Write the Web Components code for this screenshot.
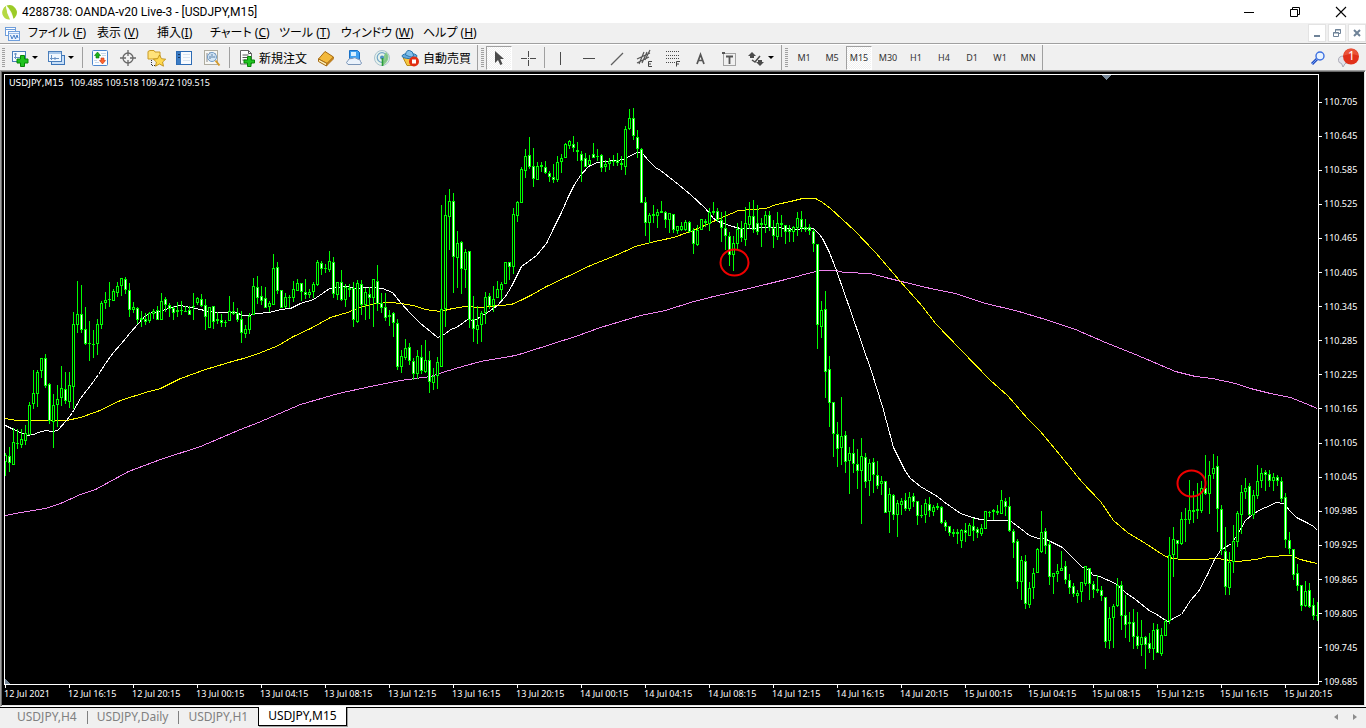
<!DOCTYPE html>
<html lang="ja">
<head>
<meta charset="utf-8">
<title>4288738: OANDA-v20 Live-3 - [USDJPY,M15]</title>
<style>
  html, body { height: 100%; margin: 0; }
  body { background: #f0f0f0; font-family: "Noto Sans", "Noto Sans CJK JP", sans-serif; font-size: 12px; color: #000; overflow: hidden; }
</style>
</head>
<body>
<trade-terminal></trade-terminal>
<script>
const ICONS = {
  logo: [16, 16, `<path d="M4 2A7.5 7.5 0 0 0 4.500 14L7 15 4.500 8z" fill="#a4cf2b"/><path d="M4 1.800Q8 3 11.500 10L12 14.500Q8 16 5 13Q6 6 4 1.800z" fill="#f4f9e4"/><path d="M4.500 1.500A7.600 7.600 0 0 1 13 13.500L11.500 15Q10 7 4.500 1.500z" fill="#9bcb27"/><path d="M1.200 5A7 7 0 0 0 8 15.500Q4.500 9 3.800 2.200 1.500 3.500 1.200 5z" fill="#b5d943"/><path d="M4 2q4 4 7.500 13l-3 .5Q5 9 4 2z" fill="#fff"/>`],
  mdi: [15, 15, `<rect x=".5" y="1.500" width="10" height="8" fill="#fff" stroke="#6f9edb"/><path d="M1 3.500h9" stroke="#6f9edb"/><rect x="3.500" y="5.500" width="11" height="9" fill="#eef5ff" stroke="#6f9edb"/><path d="M4 7.500h10" stroke="#9dbde8"/><path d="M5.500 9l1.500 4 2-4 1.500 4 1.500-4 1 3" fill="none" stroke="#477fc8"/>`],
  newchart: [18, 18, `<rect x="1.500" y="2.500" width="13" height="10" fill="#f5faff" stroke="#4a7ebb"/><path d="M4.500 4v6M3 8.500h9M3 5h3" stroke="#6892c4" fill="none"/><path d="M9.500 6.500h4v3.500h3.500v4h-3.500v3.500h-4v-3.500H6v-4h3.500z" fill="#1fc31f" stroke="#078607"/>`],
  profiles: [18, 18, `<rect x="4.500" y="6.500" width="13" height="9" fill="#c8dff7" stroke="#3b74b8"/><rect x="1.500" y="2.500" width="13" height="10" fill="#f0f7ff" stroke="#4a7ebb"/><path d="M2 4h12" stroke="#a9c8ea" stroke-width="2"/><path d="M4.500 6v5M3 9.500h9M8 8v3" stroke="#6892c4"/>`],
  market: [18, 18, `<rect x="1.500" y="1.500" width="15" height="15" rx="1" fill="#fbfdff" stroke="#4b86cf"/><path d="M10 4.500h5M4 13.500h4M11 6.500h4M3 11.500h3" stroke="#c6d6e8"/><path d="M6.500 3l3 3.500H8V9H5V6.500H3.500z" fill="#19b419" stroke="#057705" stroke-width=".6"/><path d="M11.500 15l3-3.500H13V9h-3v2.500H8.500z" fill="#ff642e" stroke="#c6330b" stroke-width=".6"/>`],
  navigator: [18, 18, `<circle cx="9" cy="9" r="5" fill="none" stroke="#686868" stroke-width="1.300"/><path d="M9 1v6M9 11v6M1 9h6M11 9h6" stroke="#686868" stroke-width="1.300"/>`],
  favorites: [19, 18, `<path d="M1 2.500l2-1h4l1 1.500h5V10H1z" fill="#ffe27a" stroke="#c99a24"/><path d="M4.500 11v5.500h5" fill="none" stroke="#333" stroke-dasharray="1 1"/><path d="M12.500 6l2 3.700 4.200.5-3.100 2.800.9 4.200-4-2.200-4 2.200.9-4.200-3-2.800 4.200-.5z" fill="#ffd94f" stroke="#b8860b" stroke-width=".8"/>`],
  terminal: [18, 18, `<rect x="1.500" y="2.500" width="15" height="13" fill="#f8fbff" stroke="#2d6cb5"/><rect x="2" y="3" width="4" height="12" fill="#3c7cc4"/><path d="M3 5.500h2M3 8.500h2" stroke="#16355e"/><path d="M8 5.500h7M8 8.500h7M8 11.500h7" stroke="#d8e4f0"/>`],
  tester: [18, 18, `<rect x="1.500" y="1.500" width="13" height="14" fill="#f7f7f4" stroke="#b0ada0"/><path d="M4 4v9M7 3v7M12 4v5" stroke="#8a8a8a"/><circle cx="9" cy="8" r="4.500" fill="#cde4f8" fill-opacity=".8" stroke="#6f9bc8"/><path d="M7 7v3M9 5v4M11 7v2" stroke="#5b82aa"/><path d="M12.500 11.500l4 5" stroke="#d49b2c" stroke-width="2"/>`],
  order: [18, 18, `<path d="M2.500 1.500h8l3 3v10.500h-11z" fill="#fff" stroke="#666"/><path d="M10.500 1.500v3h3M4.500 6h6M4.500 8.500h6M4.500 11h4" stroke="#555" fill="none"/><path d="M9.500 7.500h3.500v3.500h3.500v3H13v3.500H9.500V14H6v-3h3.500z" fill="#22c522" stroke="#078607"/>`],
  metaeditor: [18, 18, `<path d="M1.500 10L8 2.500l8.500 5.500L10 14.500z" fill="#f3b93c" stroke="#a66a10"/><path d="M1.500 10v2.500L9.500 17l.5-2.500z" fill="#fff0b8" stroke="#a66a10"/><path d="M10 14.500l6.500-6.500v2L9.500 17z" fill="#cc8718" stroke="#a66a10" stroke-width=".6"/>`],
  vps: [18, 18, `<path d="M4.500 1.500h8l2 2v7h-10z" fill="#3ea0f0" stroke="#1870c6"/><path d="M6 3h5v4H6z" fill="#d8f0ff"/><path d="M3 15.500q-3-2 0-4 .5-2.500 4-2 3-2 5.500.5 3 0 3 2.500 2 1.500 0 3z" fill="#eaf2fb" stroke="#7994b7"/>`],
  signals: [18, 18, `<circle cx="9" cy="9" r="7.500" fill="#e7f2ec" stroke="#a9c2cf"/><circle cx="9" cy="8.500" r="4.800" fill="none" stroke="#73a5c8" stroke-width="1.200"/><path d="M13 3q5 5 0 11l-3.500 3V9z" fill="#7bc67b" opacity=".85"/><circle cx="9" cy="8.500" r="2" fill="#4b8ec2"/><path d="M9.500 9v8" stroke="#2a9d37" stroke-width="1.600"/>`],
  auto: [19, 18, `<path d="M2 8.500l14-.5-5 8.500H6z" fill="#f5c642" stroke="#b98a16"/><ellipse cx="8.500" cy="7" rx="7.500" ry="2.600" fill="#63a9dd" stroke="#2c76ae"/><path d="M4.500 6q.5-5 4-4.500t4 4.500-8 0z" fill="#83c0ea" stroke="#2c76ae"/><circle cx="13" cy="12.500" r="5" fill="#e22d12"/><rect x="11" y="10.500" width="4" height="4" fill="#fff"/>`],
  cursor: [16, 16, `<path d="M4 1v12l3-3 2.300 5 2.200-1-2.300-5H13z" fill="#4b4b4b"/>`],
  cross: [16, 16, `<path d="M8.500 1v6M8.500 10v6M1 8.500h6M10 8.500h6M8 8.500h1" stroke="#4b4b4b" shape-rendering="crispEdges"/>`],
  vline: [16, 16, `<path d="M7.500 2v13" stroke="#4b4b4b"/>`],
  hline: [16, 16, `<path d="M2 8.500h12" stroke="#4b4b4b"/>`],
  trend: [16, 16, `<path d="M2 15L14 3" stroke="#606060" stroke-width="1.200"/>`],
  channel: [18, 18, `<path d="M1 10L14 4M1 14L13 8M3 15L8 3M6 14l5-11M9 11l5-10" stroke="#555" stroke-width="1.200"/><path d="M16 12.500h-3.500v5H16M12.500 15H15" fill="none" stroke="#444"/>`],
  fibo: [18, 18, `<path d="M2 2.500h14M2 6.500h14M2 9.500h14M2 13.500h9" stroke="#4b4b4b" stroke-dasharray="1 1"/><path d="M16 12.500h-3.500v5M12.500 15H15" fill="none" stroke="#444"/>`],
  text: [16, 16, `<path d="M4 14L7.500 4.500 11 14M5 10.500h5" fill="none" stroke="#555" stroke-width="1.700"/>`],
  label: [16, 16, `<rect x="2.500" y="3.500" width="12" height="12" fill="none" stroke="#555" stroke-dasharray="1 1"/><path d="M5 6.500h7M8.500 6v8" stroke="#555" stroke-width="1.800"/><path d="M1 2h3v2H1z" fill="#555"/>`],
  arrows: [18, 18, `<path d="M5 3l4 4H7v2H3V7H1zM13 17l-4-4h2v-2h4v2h2z" fill="#4b4b4b"/><path d="M5 11l3 2 5-6" fill="none" stroke="#4b4b4b" stroke-width="1.500"/>`],
  search: [16, 16, `<path d="M7 9l-5 5" stroke="#244fc2" stroke-width="3"/><path d="M7 9l-5 5" stroke="#6e9cf5"/><circle cx="10" cy="6" r="4" fill="#e8f3ff" stroke="#3c6fe0" stroke-width="1.400"/>`],
  chat: [22, 20, `<path d="M7 8q-6 0-5.500 4.500 0 2.500 3 3l1.500 3.500 2-3.300Q13 15 14 11z" fill="#e2e2ea" stroke="#a9a9b5"/><circle cx="14" cy="8.500" r="8" fill="#e1301a"/><path d="M7 7.500a7 7 0 0 1 14 0q-7-3-14 0z" fill="#f06a4e" opacity=".6"/>`],
  minimize: [12, 12, `<path d="M1 6.500h10" stroke="#000"/>`],
  restore: [12, 12, `<path d="M1.500 3.500h7v7h-7zM3.500 3V1.500h7v7H9" fill="none" stroke="#000"/>`],
  close: [12, 12, `<path d="M1 1l10 10M11 1L1 11" stroke="#000" stroke-width="1.100"/>`],
  minSmall: [10, 10, `<path d="M2 8h6" stroke="#6f8398" stroke-width="2"/>`],
  restoreSmall: [10, 10, `<path d="M1.500 4.500h5v4h-5zM3.500 4V1.500h5v4H7" fill="none" stroke="#6f8398"/><path d="M1 5h6M3 2h6" stroke="#6f8398"/>`],
  closeSmall: [10, 10, `<path d="M2 2l6 6M8 2L2 8" stroke="#6f8398" stroke-width="2"/>`],
  left: [8, 8, `<path d="M6 1v6L2 4z" fill="#8c8c8c"/>`],
  right: [8, 8, `<path d="M2 1v6l4-3z" fill="#8c8c8c"/>`]
};

function define(name, html, setup) {
  const template = document.createElement('template');
  template.innerHTML = html;
  customElements.define(name, class extends HTMLElement {
    connectedCallback() {
      if (this.shadowRoot) return;
      const root = this.attachShadow({ mode: 'open' });
      root.append(template.content.cloneNode(true));
      if (setup) setup(this, root);
    }
  });
}

define('ui-icon', `<style>:host{display:block;flex:none}svg{display:block}</style>`, (el, root) => {
  const [w, h, body] = ICONS[el.getAttribute('name')];
  root.innerHTML += `<svg width="${w}" height="${h}" viewBox="0 0 ${w} ${h}" aria-hidden="true">${body}</svg>`;
});

define('title-bar', `
<style>
  :host { display: flex; align-items: center; height: 23px; background: #fff; padding: 0 2px; }
  h1 { margin: 0 auto 0 4px; font: 400 12px/22px Roboto, "Noto Sans", sans-serif; }
  button { border: 0; padding: 0; width: 46px; height: 22px; background: none; display: grid; place-items: center; }
</style>
<ui-icon name="logo"></ui-icon><h1><slot></slot></h1>
<button aria-label="最小化"><ui-icon name="minimize"></ui-icon></button>
<button aria-label="元に戻す"><ui-icon name="restore"></ui-icon></button>
<button aria-label="閉じる"><ui-icon name="close"></ui-icon></button>`);

define('menu-bar', `
<style>
  :host { display: flex; align-items: center; gap: 2px; height: 20px; border-bottom: 1px solid #a0a0a0; box-shadow: 0 1px #fff; margin-bottom: 1px; padding-left: 5px; background: #f0f0f0; }
  nav { display: grid; grid-template-columns: 69px 60px 53px 69px 62px 82px auto; margin: 0 auto 0 6px; font-feature-settings: "palt"; }
  a { color: #000; text-decoration: none; line-height: 18px; white-space: nowrap; }
  button { width: 18px; height: 18px; padding: 0; border: 1px solid #e3e3e3; background: #fff; display: grid; place-items: center; }
</style>
<ui-icon name="mdi"></ui-icon>
<nav>
  <a href="#">ファイル (<u>F</u>)</a><a href="#">表示 (<u>V</u>)</a><a href="#">挿入(<u>I</u>)</a><a href="#">チャート (<u>C</u>)</a><a href="#">ツール (<u>T</u>)</a><a href="#">ウィンドウ (<u>W</u>)</a><a href="#">ヘルプ (<u>H</u>)</a>
</nav>
<button aria-label="チャートを最小化"><ui-icon name="minSmall"></ui-icon></button>
<button aria-label="チャートを元に戻す"><ui-icon name="restoreSmall"></ui-icon></button>
<button aria-label="チャートを閉じる"><ui-icon name="closeSmall"></ui-icon></button>`);

define('tool-button', `
<style>
  :host { display: block; flex: none; }
  button { box-sizing: border-box; height: 24px; min-width: 28px; padding: 0; border: 0; background: none; display: flex; align-items: center; justify-content: center; color: inherit; font: inherit; white-space: nowrap; }
  :host([wide]) button { padding: 0 5px; gap: 3px; font-size: 12px; }
  :host([menu]) button { width: 36px; padding-left: 4px; gap: 3px; justify-content: flex-start; }
  :host([menu]) button::after { content: ""; border: 3px solid transparent; border-top-color: #000; border-bottom: 0; }
  :host([pressed]) button { width: 26px; min-width: 26px; margin-right: 2px; border: 1px solid #a0a0a0; border-right-color: #fff; border-bottom-color: #fff; background: repeating-conic-gradient(#f0f0f0 0 25%, #fff 0 50%) 0 0 / 2px 2px; }
</style>
<button><slot></slot></button>`, (el, root) => {
  const label = el.getAttribute('label');
  if (label) root.querySelector('button').setAttribute('aria-label', label);
});

define('tool-group', `
<style>
  :host { display: flex; flex: none; align-items: center; border-right: 1px solid #a0a0a0; padding: 0 3px; height: 25px; }
  :host::before { content: ""; width: 3px; height: 20px; margin-right: 2px; background: repeating-linear-gradient(#a0a0a0 0 1px, #f0f0f0 1px 2px); }
</style><slot></slot>`);

define('tool-sep', `<style>:host{display:block;flex:none;width:1px;height:21px;margin:0 3px;background:#a0a0a0}</style>`);

define('tool-bar', `
<style>
  :host { display: flex; align-items: center; height: 25px; background: #f0f0f0; }
  .main { padding: 0 1px 0 2px; }
  .drawing { padding-right: 2px; }
  .drawing tool-sep { margin: 0 2px; }
  .frames { font-size: 9px; color: #333; padding-right: 0; }
  .right { display: flex; align-items: center; gap: 11px; margin-left: auto; padding-right: 7px; }
  .right button { border: 0; padding: 0; background: none; display: grid; place-items: center; }
  .note { position: relative; color: #fff; font: 12px "Noto Sans", sans-serif; }
  .note span { position: absolute; left: 11px; top: 0; line-height: 16px; }
</style>
<tool-group class="main">
  <tool-button menu label="新規チャート"><ui-icon name="newchart"></ui-icon></tool-button>
  <tool-button menu label="組表示"><ui-icon name="profiles"></ui-icon></tool-button>
  <tool-sep></tool-sep>
  <tool-button label="気配値表示"><ui-icon name="market"></ui-icon></tool-button>
  <tool-button label="データウィンドウ"><ui-icon name="navigator"></ui-icon></tool-button>
  <tool-button label="ナビゲーター"><ui-icon name="favorites"></ui-icon></tool-button>
  <tool-button label="ターミナル"><ui-icon name="terminal"></ui-icon></tool-button>
  <tool-button label="ストラテジーテスター"><ui-icon name="tester"></ui-icon></tool-button>
  <tool-sep></tool-sep>
  <tool-button wide><ui-icon name="order"></ui-icon>新規注文</tool-button>
  <tool-button label="MetaEditor"><ui-icon name="metaeditor"></ui-icon></tool-button>
  <tool-button label="VPS"><ui-icon name="vps"></ui-icon></tool-button>
  <tool-button label="シグナル"><ui-icon name="signals"></ui-icon></tool-button>
  <tool-button wide><ui-icon name="auto"></ui-icon>自動売買</tool-button>
</tool-group>
<tool-group class="drawing">
  <tool-button pressed label="カーソル"><ui-icon name="cursor"></ui-icon></tool-button>
  <tool-button label="クロスヘア"><ui-icon name="cross"></ui-icon></tool-button>
  <tool-sep></tool-sep>
  <tool-button label="垂直線"><ui-icon name="vline"></ui-icon></tool-button>
  <tool-button label="水平線"><ui-icon name="hline"></ui-icon></tool-button>
  <tool-button label="トレンドライン"><ui-icon name="trend"></ui-icon></tool-button>
  <tool-button label="チャネル"><ui-icon name="channel"></ui-icon></tool-button>
  <tool-button label="フィボナッチ"><ui-icon name="fibo"></ui-icon></tool-button>
  <tool-button label="テキスト"><ui-icon name="text"></ui-icon></tool-button>
  <tool-button label="ラベル"><ui-icon name="label"></ui-icon></tool-button>
  <tool-button menu label="矢印"><ui-icon name="arrows"></ui-icon></tool-button>
</tool-group>
<tool-group class="frames">
  <tool-button>M1</tool-button><tool-button>M5</tool-button><tool-button pressed>M15</tool-button><tool-button>M30</tool-button><tool-button>H1</tool-button><tool-button>H4</tool-button><tool-button>D1</tool-button><tool-button>W1</tool-button><tool-button>MN</tool-button>
</tool-group>
<div class="right">
  <button aria-label="検索"><ui-icon name="search"></ui-icon></button>
  <button class="note"><ui-icon name="chat"></ui-icon><span>1</span></button>
</div>`);

/* One candle per 4px step: direction (u, d), then high, open/close top, open/close bottom, low. */
const CANDLES = `
u453,455,462,476 d447,456,463,472 u428,442,465,465 d429,443,444,449 u429,439,445,448 u425,433,441,445 u402,405,435,435 u370,393,404,409
u370,372,394,407 u358,358,371,378 d354,358,386,388 d383,384,421,424 u394,405,422,448 u385,399,405,427 u366,388,398,406 d372,389,401,404
u372,385,402,408 u312,324,387,409 u281,314,325,333 d285,314,330,333 d307,329,344,345 d321,343,344,361 d330,344,345,358 u319,324,344,355
u301,303,325,329 u292,300,303,309 d282,299,300,307 u289,291,301,301 u282,286,293,297 u278,278,286,296 d277,279,290,294 d283,290,310,317
u302,307,310,313 d307,308,320,324 d311,318,320,327 d313,319,322,325 u312,313,321,323 u309,311,314,319 d306,310,320,320 u293,301,320,320
d297,299,305,312 d303,305,309,317 d306,308,313,320 u302,310,312,317 d301,310,311,315 d306,311,312,312 d306,310,315,315 u293,306,307,320
u297,298,303,305 d294,299,306,307 d299,305,317,330 u307,307,328,328 d306,306,322,329 u312,319,321,324 d314,320,323,327 d320,322,323,327
u296,311,321,321 d302,311,314,315 d308,313,320,322 d311,319,333,343 u325,329,334,338 u313,316,330,334 u278,286,315,315 d276,287,298,304
d286,296,301,305 d287,298,308,308 u301,303,307,312 u254,268,305,305 d262,267,291,294 d290,290,308,308 u293,297,307,308 d295,297,298,308
u281,289,298,302 u279,283,291,291 d283,283,292,301 d279,292,295,299 u289,292,295,298 u282,284,292,298 u260,262,285,286 d261,263,269,275
d264,268,269,273 u251,261,270,272 d257,262,294,298 u282,282,295,300 d270,282,300,301 u284,287,300,307 d284,288,290,297 d282,288,320,327
u280,283,322,323 d280,284,305,315 u288,292,305,320 d287,294,298,319 u279,279,298,327 d265,281,304,311 d293,303,308,313 d293,307,318,321
u310,315,317,326 d312,313,323,337 d319,323,367,370 u350,356,367,373 u339,348,358,360 d343,347,361,365 d358,361,374,380 u350,356,374,379
d345,357,371,374 u340,360,372,373 d351,360,382,393 u368,376,383,390 u357,362,376,389 u205,309,367,367 u195,215,309,327 u189,201,217,250
d193,201,257,293 u231,243,258,288 d241,242,269,294 u249,252,270,288 d251,251,320,328 d296,319,329,342 u306,325,330,344 u311,313,325,342
u292,297,313,324 d293,296,306,309 u286,299,306,312 u281,289,298,298 u282,284,290,300 u262,262,284,284 d262,262,267,280 u208,214,267,274
u201,202,216,222 u167,169,203,203 u149,156,171,178 d137,155,167,169 d148,166,179,187 u162,166,180,180 d162,165,167,172 d161,167,173,174
d171,173,177,182 d164,177,180,183 u156,162,180,182 u154,158,162,173 u143,144,158,158 u140,141,146,149 d136,144,148,152 d142,150,152,161
d151,154,161,182 d153,158,167,167 u155,160,165,165 d143,154,158,158 d149,156,157,161 d154,155,168,172 u160,164,167,172 u158,161,164,170
u155,161,162,166 d153,160,163,166 d156,163,165,170 u126,129,167,175 u109,118,129,130 d108,118,136,140 d130,137,149,158 d148,149,203,203
d197,202,223,236 u213,215,223,243 u205,214,216,223 u209,212,216,228 d201,211,213,213 d211,212,220,228 u213,213,220,233 d214,214,230,233
u226,226,231,234 u222,226,230,231 u220,222,230,231 d221,222,232,233 d228,230,244,254 u225,230,245,246 u219,219,230,230 d219,221,223,227
u208,212,224,231 d202,211,213,215 d208,211,220,222 d212,220,228,242 d211,228,236,250 d232,236,255,266 u236,243,255,271 u223,229,244,249
d221,228,238,242 u207,223,240,246 u202,216,225,229 d200,216,230,233 d205,223,232,235 u218,223,225,247 u211,215,225,233 d211,215,228,231
d220,228,236,248 u212,223,237,240 d215,223,225,237 d225,225,232,244 d225,229,232,242 u226,227,232,242 u212,218,228,236 d211,219,228,232
d219,227,230,232 d224,227,231,235 d229,231,244,252 d244,244,325,349 u301,310,327,338 d291,309,372,398 d356,369,403,427 d402,402,434,457
d422,434,449,467 u397,436,448,465 d431,435,462,473 u447,453,461,494 d439,453,464,473 d449,464,471,489 u438,456,471,524 d453,457,482,488
u459,463,481,496 d458,462,475,493 d461,475,486,489 u476,481,484,495 d481,481,513,513 u488,494,512,533 d494,495,515,520 u500,503,515,537
u498,501,505,515 d493,500,509,511 u492,497,509,511 d493,496,502,507 d501,501,516,525 d505,515,516,518 u499,503,515,523 d497,504,511,517
u505,507,512,516 d503,506,508,510 d506,507,523,524 d520,522,527,531 d526,526,533,536 d529,532,534,537 d529,532,534,544 u529,530,541,548
d523,530,533,542 u523,525,536,536 d518,526,531,541 d527,529,533,538 u524,528,534,536 u511,511,529,529 d511,512,513,517 u509,510,512,520
d505,511,513,515 u490,500,514,514 d498,501,507,516 d497,506,531,532 d529,531,543,558 d539,541,582,589 u556,560,582,600 d555,561,604,609
u582,588,605,608 u568,573,588,599 u548,549,573,573 u511,532,552,553 d528,531,546,554 d540,544,577,585 u573,573,577,594 u564,571,574,582
u551,568,571,571 d561,566,580,584 d574,580,588,594 d583,586,594,597 u590,593,596,603 u582,582,592,602 u566,566,584,586 d568,568,584,600
d581,584,590,598 d575,589,591,593 d586,590,596,601 d597,597,642,648 u607,618,641,649 u604,606,618,648 u578,585,606,607 d581,585,616,630
d595,615,625,638 d612,622,624,642 d609,622,637,649 d612,636,646,649 u620,637,645,656 d636,637,645,669 d633,643,649,653 u623,630,649,660
d624,629,653,653 u628,635,654,656 u619,621,636,636 u537,555,621,624 u527,539,555,577 d540,540,544,559 u512,519,544,545 d508,519,520,542
u480,510,520,524 d491,510,512,523 d483,509,511,519 u481,488,511,513 d455,488,494,495 u461,475,494,514 u454,468,474,479 d456,466,509,532
d505,509,550,555 d527,551,587,595 u552,562,588,595 u525,541,562,573 u511,513,542,547 u485,492,515,534 u478,488,492,499 d483,486,515,516
u490,495,515,519 u465,481,496,499 u468,473,481,488 d470,472,475,491 d470,474,481,487 u473,477,481,491 d475,477,481,486 d477,481,499,502
d493,497,540,548 d532,540,549,554 d549,549,575,580 d564,573,586,591 d585,585,606,611 u581,591,606,607 d583,590,607,608 d598,605,616,620
u602,615,616,621`.trim().split(/\s+/);

const AVERAGES = {
  '#ee82ee': '5,515 20,512 45,508 60,503 80,494 95,489 128,471 160,459 200,446 240,429 258,422 265,419 300,404 338,393 370,386 400,380 430,376 442,372 455,368 480,361 515,355 525,352 550,344 575,336 600,327 630,318 640,315 665,310 690,302 713,296 740,290 765,284 785,279 800,275 819,270 835,270 844,272 870,273 885,277 905,282 930,288 955,293 985,303 1015,310 1045,319 1075,329 1105,342 1135,354 1175,371 1195,376 1212,378 1235,383 1250,388 1270,393 1290,397 1305,403 1317,408',
  '#ffff00': '5,418 16,420 66,420 80,417 97,411 120,400 145,392 160,388 180,378 205,369 235,360 243,358 258,353 278,345 293,336 310,328 330,317 347,312 362,306 375,303 390,302 400,303 413,305 425,309 440,311 452,308 465,306 480,307 500,305 511,304 520,300 532,294 546,286 567,276 590,265 615,255 635,246 650,242 673,237 690,231 702,226 715,220 724,216 738,210 752,209 765,208 776,204 790,201 802,198 815,198 822,202 830,208 854,230 875,252 899,280 922,306 935,323 960,349 990,380 1007,395 1027,418 1040,431 1064,460 1081,481 1100,501 1113,520 1127,532 1145,543 1165,556 1173,558 1182,559 1200,559 1217,558 1237,561 1255,559 1268,556 1290,555 1300,559 1312,562 1317,563',
  '#ffffff': '5,425 13,429 20,432 27,435 33,434 38,432 45,430 52,431 57,430 66,420 72,412 80,398 90,385 98,374 105,363 113,352 121,343 130,332 138,323 145,315 152,312 160,311 170,307 180,305 190,307 200,309 208,311 220,312 235,312 243,315 248,315 257,313 269,312 280,309 290,308 300,303 313,299 322,293 329,288 337,287 348,286 355,288 370,287 382,288 392,292 400,302 410,313 420,323 430,331 437,337 444,334 450,329 456,327 463,322 467,319 474,320 482,315 490,310 497,305 505,296 511,286 516,276 521,266 528,261 536,255 546,243 553,228 561,212 568,196 574,184 580,175 588,166 597,162 605,161 615,160 624,159 630,155 637,152 642,153 648,160 655,167 660,170 673,180 690,194 705,208 713,218 720,222 732,226 740,228 750,228 765,227 775,227 785,228 795,229 805,228 813,228 819,234 822,238 829,252 836,270 843,290 850,310 861,342 871,371 882,406 893,447 905,471 910,478 920,486 930,492 937,496 943,501 960,513 972,517 980,519 988,520 1009,520 1012,522 1020,528 1029,535 1038,538 1044,538 1048,540 1062,547 1072,557 1082,567 1088,569 1093,575 1099,576 1115,583 1125,592 1135,599 1150,611 1155,613 1165,620 1168,621 1176,616 1181,614 1190,600 1198,591 1207,574 1214,559 1220,550 1231,543 1237,534 1245,520 1252,514 1260,509 1270,505 1275,502 1283,503 1290,511 1296,517 1306,522 1313,526 1317,530'
};

define('price-plot', `
<style>
  :host { display: block; min-width: 0; min-height: 0; overflow: hidden; position: relative; border: 1px solid #fff; }
  svg { display: block; width: 100%; height: 100%; }
  p { position: absolute; left: 4px; top: 2px; margin: 0; display: flex; gap: 6px; color: #fff; font-size: 9px; line-height: 12px; }
  ::slotted([slot="symbol"]) { font-family: "DejaVu Sans", sans-serif; }
</style>
<svg role="img" aria-label="USDJPY M15" viewBox="5 75 1313 609" preserveAspectRatio="none" shape-rendering="crispEdges"></svg>
<p><slot name="symbol"></slot><slot name="quote"></slot></p>`, (el, root) => {
  let green = '', white = '', black = '';
  const box = (x, y, w, h) => `M${x} ${y}h${w}v${h}h-${w}z`;
  CANDLES.forEach((c, i) => {
    const x = 5 + i * 4;
    const [high, top, bottom, low] = c.slice(1).split(',').map(Number);
    green += box(x, high, 1, low - high) + box(x - 1, top, 3, bottom - top);
    if (bottom - top > 2) {
      const inner = box(x, top + 1, 1, bottom - top - 2);
      if (c[0] === 'd') white += inner; else black += inner;
    }
  });
  let lines = '';
  for (const [color, points] of Object.entries(AVERAGES)) lines += `<polyline transform="translate(.5 .5)" points="${points}" fill="none" stroke="${color}"/>`;
  root.querySelector('svg').innerHTML = `${lines}<path d="${green}" fill="#0f0"/><path d="${black}" fill="#000"/><path d="${white}" fill="#fff"/>
    <path d="M1102 75h9l-4.500 5z" fill="#778899"/><path d="M5 679v5h5z" fill="#778899"/>
    <g fill="none" stroke="#f00000" stroke-width="2" shape-rendering="auto"><ellipse cx="734.500" cy="262.500" rx="14" ry="13"/><ellipse cx="1191.500" cy="483.500" rx="14" ry="13"/></g>`;
});

define('price-axis', `
<style>
  :host { display: block; }
  ol { box-sizing: border-box; height: 100%; margin: 0; padding: 22px 0 0; list-style: none; display: flex; flex-direction: column; justify-content: space-between; }
  li { display: flex; align-items: center; gap: 2px; line-height: 12px; }
  li::before { content: ""; width: 3px; height: 1px; background: #fff; }
</style><ol></ol>`, (el, root) => {
  for (let i = 0; i < 18; i++) {
    const li = document.createElement('li');
    li.textContent = (110.705 - i * 0.06).toFixed(3);
    root.querySelector('ol').append(li);
  }
});

define('time-axis', `
<style>
  :host { display: block; }
  ol { margin: 0; padding: 0; list-style: none; display: flex; }
  li { flex: none; width: 64px; line-height: 12px; white-space: nowrap; }
  li::before { content: ""; display: block; width: 1px; height: 3px; margin-left: 1px; background: #fff; }
</style><ol></ol>`, (el, root) => {
  const labels = ['12 Jul 2021', '12 Jul 16:15', '12 Jul 20:15'];
  for (const day of [13, 14, 15]) for (const h of ['00', '04', '08', '12', '16', '20']) labels.push(`${day} Jul ${h}:15`);
  root.querySelector('ol').innerHTML = labels.map(t => `<li>${t}</li>`).join('');
});

define('chart-window', `
<style>
  :host { display: grid; flex: 1; min-height: 0; grid-template-columns: minmax(0, 1fr) 45px; grid-template-rows: minmax(0, 1fr) 20px; box-sizing: border-box; background: #000; color: #fff; font-size: 9px; border: 1px solid #a0a0a0; border-right-color: #fff; border-bottom-color: #fff; box-shadow: inset 1px 1px #696969, inset -1px -1px #e3e3e3; padding: 3px 1px 1px 3px; }
  price-axis { margin-bottom: -3px; }
  time-axis { grid-column: 1 / -1; }
</style>
<price-plot><span slot="symbol">USDJPY,M15</span><span slot="quote">109.485 109.518 109.472 109.515</span></price-plot>
<price-axis></price-axis>
<time-axis></time-axis>`);

define('chart-tabs', `
<style>
  :host { display: flex; align-items: flex-start; height: 20px; border-top: 1px solid #000; background: #f0f0f0; padding-left: 7px; font-size: 12px; }
  button { height: 18px; padding: 0 10px; border: 0; background: none; color: #808080; font: inherit; line-height: 18px; position: relative; }
  button + button:not(.on)::before { content: ""; position: absolute; left: 0; top: 3px; width: 1px; height: 13px; background: #808080; }
  .on { color: #000; background: #fff; border: 1px solid #000; border-top: 0; padding: 0 9px; margin-top: -1px; height: 19px; box-shadow: 1px 1px #a0a0a0; }
  .scroll { margin-left: auto; display: flex; gap: 11px; padding: 5px 7px 0 0; }
  .scroll button { padding: 0; height: 8px; }
  .scroll button::before { display: none; }
</style>
<button>USDJPY,H4</button><button>USDJPY,Daily</button><button>USDJPY,H1</button><button class="on">USDJPY,M15</button>
<div class="scroll"><button aria-label="左へ"><ui-icon name="left"></ui-icon></button><button aria-label="右へ"><ui-icon name="right"></ui-icon></button></div>`);

define('trade-terminal', `
<style>:host { display: flex; flex-direction: column; height: 100vh; }</style>
<title-bar>4288738: OANDA-v20 Live-3 - [USDJPY,M15]</title-bar>
<menu-bar></menu-bar>
<tool-bar></tool-bar>
<chart-window></chart-window>
<chart-tabs></chart-tabs>`);
</script>
</body>
</html>
